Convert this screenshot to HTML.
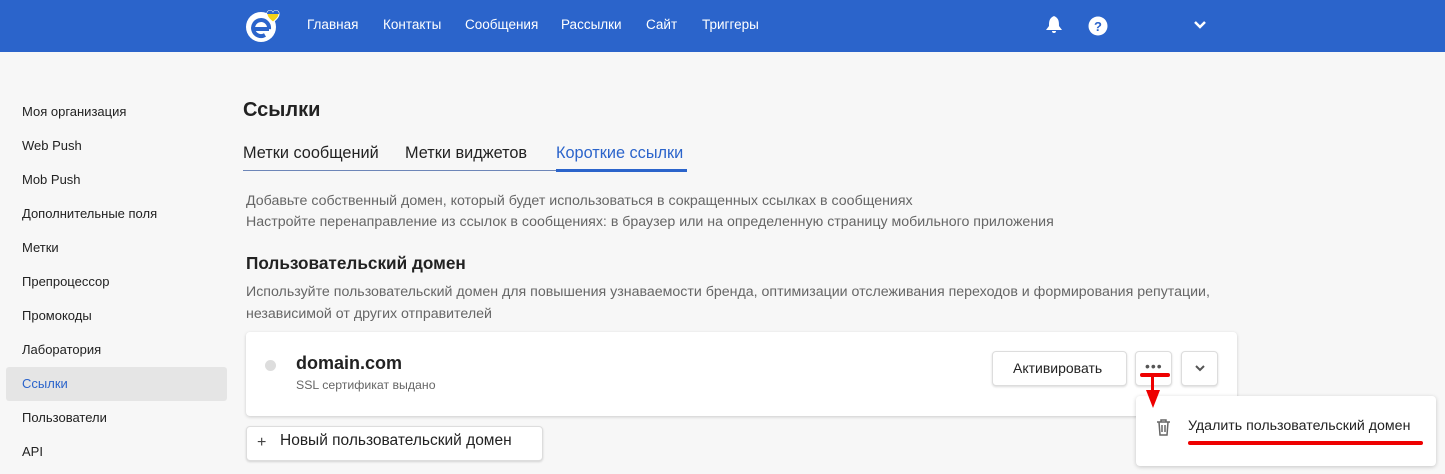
<!DOCTYPE html>
<html><head><meta charset="utf-8"><style>
*{box-sizing:border-box;margin:0;padding:0}
body{width:1445px;height:474px;overflow:hidden;background:#f7f7f7;font-family:"Liberation Sans",sans-serif;color:#222;position:relative}
.hdr{position:absolute;left:0;top:0;width:1445px;height:52px;background:#2b64cb}
.nav{position:absolute;top:17px;color:#fff;font-size:13.5px}
.side{position:absolute;left:22px;font-size:13px;color:#222}
.a{position:absolute}
.btn{position:absolute;background:#fff;border:1px solid #ddd;border-radius:4px;box-shadow:0 1px 2px rgba(0,0,0,.15)}
</style></head><body>
<div class="hdr">
 <svg class="a" style="left:243px;top:8px" width="52" height="38" viewBox="0 0 52 38">
  <circle cx="18" cy="19" r="15" fill="#fff"/>
  <path d="M9 21 H26 M26 21 A8 8 0 1 0 22 27" stroke="#2b64cb" stroke-width="4" fill="none"/>
  <path d="M36 6 C36 2 31 1 30 5 C29 1 24 2 24 6 C24 10 30 14 30 14 C30 14 36 10 36 6Z" fill="#f3d219" stroke="#fff" stroke-width="1"/>
  <path d="M24 6 C24 2 29 1 30 5 C31 1 36 2 36 6Z" fill="#2b64cb"/>
 </svg>
 <div class="nav" style="left:307px">Главная</div>
 <div class="nav" style="left:383px">Контакты</div>
 <div class="nav" style="left:465px">Сообщения</div>
 <div class="nav" style="left:561px">Рассылки</div>
 <div class="nav" style="left:646px">Сайт</div>
 <div class="nav" style="left:702px">Триггеры</div>
 <svg class="a" style="left:1045px;top:15px" width="18" height="20" viewBox="0 0 18 20"><path d="M9 1 C4 3 4 7 4 11 L1 15 H17 L14 11 C14 7 14 3 9 1Z M7 16 A2 2 0 0 0 11 16Z" fill="#fff"/></svg>
 <svg class="a" style="left:1088px;top:16px" width="20" height="20" viewBox="0 0 20 20"><circle cx="10" cy="10" r="9.5" fill="#fff"/><text x="10" y="15" text-anchor="middle" font-family="Liberation Sans" font-weight="bold" font-size="13" fill="#2b64cb">?</text></svg>
 <svg class="a" style="left:1193px;top:20px" width="14" height="10" viewBox="0 0 14 10"><path d="M2 2 L7 7 L12 2" stroke="#fff" stroke-width="2.5" fill="none"/></svg>
</div>

<div class="side" style="top:104px">Моя организация</div>
<div class="side" style="top:138px">Web Push</div>
<div class="side" style="top:172px">Mob Push</div>
<div class="side" style="top:206px">Дополнительные поля</div>
<div class="side" style="top:240px">Метки</div>
<div class="side" style="top:274px">Препроцессор</div>
<div class="side" style="top:308px">Промокоды</div>
<div class="side" style="top:342px">Лаборатория</div>
<div class="a" style="left:6px;top:367px;width:221px;height:34px;background:#e5e5e5;border-radius:3px"></div>
<div class="side" style="top:376px;color:#2b64cb">Ссылки</div>
<div class="side" style="top:410px">Пользователи</div>
<div class="side" style="top:444px">API</div>

<div class="a" style="left:243px;top:99px;font-size:20px;font-weight:bold">Ссылки</div>
<div class="a" style="left:243px;top:144px;font-size:16.3px">Метки сообщений</div>
<div class="a" style="left:405px;top:144px;font-size:16.3px">Метки виджетов</div>
<div class="a" style="left:556px;top:144px;font-size:16.3px;color:#2b64cb">Короткие ссылки</div>
<div class="a" style="left:243px;top:170px;width:444px;height:1px;background:#6d86b8"></div>
<div class="a" style="left:556px;top:169px;width:131px;height:3px;background:#2b64cb"></div>

<div class="a" style="left:246px;top:191px;font-size:14.2px;color:#666;line-height:21px">Добавьте собственный домен, который будет использоваться в сокращенных ссылках в сообщениях<br>Настройте перенаправление из ссылок в сообщениях: в браузер или на определенную страницу мобильного приложения</div>
<div class="a" style="left:246px;top:253px;font-size:17.2px;font-weight:bold">Пользовательский домен</div>
<div class="a" style="left:246px;top:281px;font-size:14.2px;color:#666;line-height:22px">Используйте пользовательский домен для повышения узнаваемости бренда, оптимизации отслеживания переходов и формирования репутации,<br>независимой от других отправителей</div>

<div class="a" style="left:246px;top:332px;width:991px;height:84px;background:#fff;border-radius:4px;box-shadow:0 1px 3px rgba(0,0,0,.18)"></div>
<div class="a" style="left:265px;top:360px;width:11px;height:11px;border-radius:50%;background:#ddd"></div>
<div class="a" style="left:296px;top:353px;font-size:18px;font-weight:bold">domain.com</div>
<div class="a" style="left:296px;top:378px;font-size:12.3px;color:#666">SSL сертификат выдано</div>
<div class="btn" style="left:992px;top:351px;width:135px;height:35px"></div>
<div class="a" style="left:1013px;top:360px;font-size:14px">Активировать</div>
<div class="btn" style="left:1135px;top:351px;width:37px;height:35px"></div>
<div class="a" style="left:1145px;top:358px;font-size:14px;color:#555;letter-spacing:1px">•••</div>
<div class="btn" style="left:1181px;top:351px;width:37px;height:35px"></div>
<svg class="a" style="left:1194px;top:364px" width="12" height="8" viewBox="0 0 12 8"><path d="M2 2 L6 6 L10 2" stroke="#555" stroke-width="2" fill="none"/></svg>

<div class="btn" style="left:246px;top:426px;width:297px;height:35px"></div>
<div class="a" style="left:257px;top:434px;font-size:16px;color:#444">+</div>
<div class="a" style="left:280px;top:432px;font-size:15.5px">Новый пользовательский домен</div>

<div class="a" style="left:1136px;top:396px;width:300px;height:70px;background:#fff;border-radius:4px;box-shadow:0 1px 4px rgba(0,0,0,.2)"></div>
<svg class="a" style="left:1156px;top:419px" width="15" height="17" viewBox="0 0 15 17"><path d="M1 3 H14 M5 3 V1 H10 V3 M3 3 L4 16 H11 L12 3 M6 6 V13 M9 6 V13" stroke="#666" stroke-width="1.5" fill="none"/></svg>
<div class="a" style="left:1188px;top:418px;font-size:14.2px">Удалить пользовательский домен</div>
<div class="a" style="left:1188px;top:441px;width:235px;height:4px;background:#e00;border-radius:2px"></div>

<div class="a" style="left:1140px;top:373px;width:30px;height:4px;background:#e00;border-radius:2px"></div>
<div class="a" style="left:1151px;top:377px;width:3px;height:15px;background:#e00"></div>
<svg class="a" style="left:1145px;top:390px" width="16" height="18" viewBox="0 0 16 18"><path d="M1 0 L15 0 L8 18Z" fill="#e00"/></svg>
</body></html>
